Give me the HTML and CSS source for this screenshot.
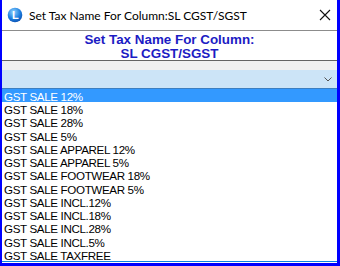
FILE: index.html
```html
<!DOCTYPE html>
<html lang="en">
<head>
    <meta charset="UTF-8">
    <title>Set Tax Name For Column</title>
    <link rel="stylesheet" href="styles.css">
</head>
<body>
    <div class="window">
        <div class="titlebar">
            <svg class="app-icon" width="16" height="16" viewBox="0 0 16 16">
                <defs>
                    <radialGradient id="ball" cx="0.4" cy="0.3" r="0.75">
                        <stop offset="0" stop-color="#8fd3ff"/>
                        <stop offset="0.6" stop-color="#1e7fe0"/>
                        <stop offset="1" stop-color="#0b4fb0"/>
                    </radialGradient>
                </defs>
                <circle cx="8" cy="8" r="7.3" fill="url(#ball)"/>
                <text x="8.3" y="12.2" text-anchor="middle" font-family="Liberation Sans, sans-serif" font-weight="bold" font-size="11" fill="#fff">L</text>
            </svg>
            <span class="title">Set Tax Name For Column:SL CGST/SGST</span>
            <svg class="close" width="12" height="12" viewBox="0 0 12 12">
                <path d="M1 1 L11 11 M11 1 L1 11" stroke="#111" stroke-width="1.1" fill="none"/>
            </svg>
        </div>

        <div class="header">
            <div>Set Tax Name For Column:</div>
            <div>SL CGST/SGST</div>
        </div>

        <div class="strip"></div>

        <div class="combo">
            <svg width="8" height="5" viewBox="0 0 8 5">
                <path d="M0.5 0.5 L4 4 L7.5 0.5" stroke="#555" stroke-width="1" fill="none"/>
            </svg>
        </div>

        <ul class="list">
            <li class="selected">GST SALE 12%</li>
            <li>GST SALE 18%</li>
            <li>GST SALE 28%</li>
            <li>GST SALE 5%</li>
            <li>GST SALE APPAREL 12%</li>
            <li>GST SALE APPAREL 5%</li>
            <li>GST SALE FOOTWEAR 18%</li>
            <li>GST SALE FOOTWEAR 5%</li>
            <li>GST SALE INCL.12%</li>
            <li>GST SALE INCL.18%</li>
            <li>GST SALE INCL.28%</li>
            <li>GST SALE INCL.5%</li>
            <li>GST SALE TAXFREE</li>
        </ul>
    </div>
</body>
</html>
```

FILE: styles.css
```css
/* dialog window */
body {
    margin: 0;
    background: #ffffff;
}
.window {
    width: 340px;
    height: 266px;
    box-sizing: border-box;
    border-left: 2px solid #0000ff;
    border-right: 3px solid #0000ff;
    border-bottom: 3px solid #0000ff;
    background: #ffffff;
    display: flex;
    flex-direction: column;
}
.titlebar {
    height: 30px;
    border-bottom: 1px solid #8c8c8c;
    display: flex;
    align-items: center;
    padding-left: 5px;
    padding-right: 5px;
}
.app-icon {
    flex: none;
}
.title {
    flex: 1;
    margin-left: 6px;
    font-family: 'Lato', sans-serif;
    font-size: 12px;
    color: #000000;
    white-space: nowrap;
}
.close {
    flex: none;
    margin-right: 1px;
}
.header {
    height: 30px;
    box-sizing: border-box;
    padding-top: 2px;
    border-bottom: 1px solid #646464;
    text-align: center;
    font-family: 'Liberation Sans', Arial, sans-serif;
    font-weight: bold;
    font-size: 13.4px;
    line-height: 14px;
    color: #1c1cc4;
}
.strip {
    height: 9px;
    background: #f0f0f0;
}
.combo {
    height: 18px;
    background: #cce4f7;
    border-bottom: 1px solid #3d7fc0;
    display: flex;
    align-items: center;
    justify-content: flex-end;
    padding-right: 5px;
}
.list {
    margin: 0;
    padding: 0;
    list-style: none;
    height: 172px;
    border-bottom: 1px solid #0a84e0;
    display: flex;
    flex-direction: column;
    font-family: 'Liberation Sans', Arial, sans-serif;
    font-size: 11.6px;
    letter-spacing: -0.35px;
    color: #000000;
}
.list li {
    flex: 1;
    padding-left: 2px;
    padding-top: 2px;
    line-height: 11px;
    white-space: nowrap;
}
.list .selected {
    background: #3399ff;
    color: #ffffff;
}
```
